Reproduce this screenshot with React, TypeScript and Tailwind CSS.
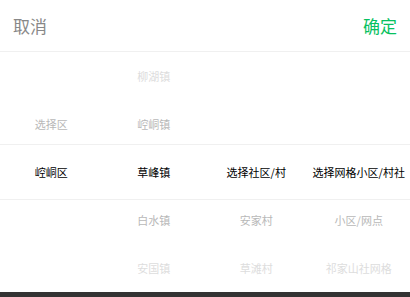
import React from "react";

type Cell = { text: string; level: 0 | 1 | 2 } | null;

const columns: Cell[][] = [
  [null, { text: "选择区", level: 1 }, { text: "崆峒区", level: 0 }, null, null],
  [
    { text: "柳湖镇", level: 2 },
    { text: "崆峒镇", level: 1 },
    { text: "草峰镇", level: 0 },
    { text: "白水镇", level: 1 },
    { text: "安国镇", level: 2 },
  ],
  [null, null, { text: "选择社区/村", level: 0 }, { text: "安家村", level: 1 }, { text: "草滩村", level: 2 }],
  [null, null, { text: "选择网格小区/村社", level: 0 }, { text: "小区/网点", level: 1 }, { text: "祁家山社网格", level: 2 }],
];

const levelClass = (l: 0 | 1 | 2) =>
  l === 0 ? "text-[#000000]" : l === 1 ? "text-[#b8b8b8]" : "text-[#dddddd]";

export default function App() {
  return (
    <div
      className="w-[410px] h-[297px] bg-white flex flex-col overflow-hidden"
      style={{ fontFamily: '"Noto Sans CJK SC", "Noto Sans", sans-serif' }}
    >
      <div className="h-[52px] border-b border-[#f0f0f0] flex items-center justify-between px-[13px] shrink-0">
        <span className="text-[17px] text-[#888888] leading-none">取消</span>
        <span className="text-[17px] text-[#07c160] leading-none">确定</span>
      </div>
      <div className="relative h-[240px] shrink-0 grid grid-cols-4">
        {columns.map((col, ci) => (
          <div key={ci} className="flex flex-col">
            {col.map((cell, ri) => (
              <div key={ri} className="h-[48px] flex items-center justify-center">
                {cell && (
                  <span className={`text-[11px] leading-none whitespace-nowrap ${levelClass(cell.level)}`}>
                    {cell.text}
                  </span>
                )}
              </div>
            ))}
          </div>
        ))}
        <div className="absolute left-0 right-0 top-[92px] h-[56px] border-y border-[#f0f0f0] pointer-events-none" />
      </div>
      <div className="flex-1 bg-[#333333]" />
    </div>
  );
}
